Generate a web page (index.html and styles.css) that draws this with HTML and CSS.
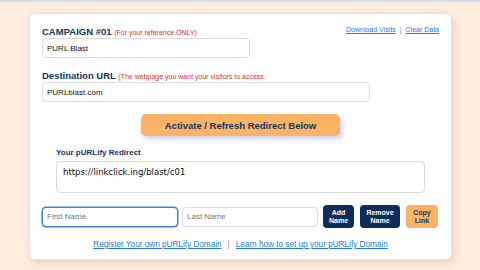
FILE: index.html
```html
<!DOCTYPE html>
<html lang="en">
<head>
  <meta charset="UTF-8">
  <title>pURLify Campaign</title>
  <link rel="stylesheet" href="styles.css">
</head>
<body>
  <div class="card">
    <div class="head-row">
      <div class="label">CAMPAIGN #01 <span class="note">(For your reference ONLY)</span></div>
      <div class="top-links">
        <a href="#">Download Visits</a><span class="sep">|</span><a href="#">Clear Data</a>
      </div>
    </div>
    <input type="text" class="field campaign" value="PURL Blast">

    <div class="label dest">Destination URL <span class="note">(The webpage you want your visitors to access.</span></div>
    <input type="text" class="field dest-url" value="PURLblast.com">

    <div class="activate-wrap">
      <button class="activate">Activate / Refresh Redirect Below</button>
    </div>

    <div class="redirect">
      <div class="redirect-label">Your pURLify Redirect</div>
      <div class="redirect-box">https://linkclick.ing/blast/c01</div>
    </div>

    <div class="name-row">
      <input type="text" class="field name focused" placeholder="First Name">
      <input type="text" class="field name" placeholder="Last Name">
      <button class="small navy add">Add<br>Name</button>
      <button class="small navy remove">Remove<br>Name</button>
      <button class="small orange copy">Copy<br>Link</button>
    </div>

    <div class="footer">
      <a href="#">Register Your own pURLify Domain</a><span class="sep">|</span><a href="#">Learn how to set up your pURLify Domain</a>
    </div>
  </div>
</body>
</html>
```

FILE: styles.css
```css
body {
  margin: 0;
  padding: 0;
  font-family: 'Liberation Sans', Arial, sans-serif;
  background: #fdeedf;
  border-top: 2px solid #d5dcf2;
  height: 268px;
  overflow: hidden;
}
.card {
  margin: 11px 0 0 29px;
  width: 397px;
  height: 233px;
  padding: 12px 12px 0 12px;
  background: #fff;
  border: 1px solid #e6e2e2;
  border-radius: 6px;
  box-shadow: 2px 3px 8px rgba(120, 80, 80, 0.18);
}
.head-row {
  display: flex;
  justify-content: space-between;
  align-items: flex-start;
}
.label {
  font-size: 9.5px;
  font-weight: bold;
  color: #14365f;
  line-height: 11px;
}
.note {
  font-size: 7px;
  font-weight: normal;
  color: #ee2b2b;
}
.top-links {
  font-size: 7px;
  line-height: 9px;
  margin-top: -1px;
}
a {
  color: #1f78e6;
}
.sep {
  color: #888;
  margin: 0 4px;
}
.field {
  box-sizing: border-box;
  height: 20px;
  padding: 0 4px;
  border: 1px solid #dcdcdc;
  border-radius: 4px;
  font-family: 'Liberation Sans', Arial, sans-serif;
  font-size: 8px;
  color: #111;
  background: #fff;
  outline: none;
  display: block;
}
.field::placeholder {
  color: #777;
}
.campaign {
  width: 208px;
}
.dest {
  margin-top: 12px;
}
.dest-url {
  width: 328px;
}
.activate-wrap {
  display: flex;
  justify-content: center;
  margin-top: 12px;
}
.activate {
  width: 199px;
  height: 22px;
  border: none;
  border-radius: 5px;
  background: #fdb365;
  color: #14365f;
  font-family: 'Liberation Sans', Arial, sans-serif;
  font-size: 9.5px;
  font-weight: bold;
  box-shadow: 2px 3px 5px rgba(110, 110, 220, 0.35);
}
.redirect {
  padding: 0 14px;
  margin-top: 12px;
}
.redirect-label {
  font-size: 8px;
  font-weight: bold;
  color: #14365f;
  line-height: 10px;
}
.redirect-box {
  box-sizing: border-box;
  margin-top: 3px;
  height: 32px;
  padding: 5px 6px;
  border: 1px solid #dcdcdc;
  border-radius: 4px;
  font-family: 'DejaVu Sans', sans-serif;
  font-size: 8.5px;
  color: #111;
}
.name-row {
  display: flex;
  align-items: center;
  margin-top: 12px;
}
.name {
  width: 136px;
  height: 20px;
  margin-right: 4px;
}
.name + .name {
  margin-right: 5px;
}
.focused {
  border: 1px solid #3f7fd9;
  box-shadow: 0 0 0 0.5px #3f7fd9;
}
.small {
  height: 23px;
  padding: 0;
  border: none;
  border-radius: 4px;
  font-family: 'Liberation Sans', Arial, sans-serif;
  font-size: 7px;
  font-weight: bold;
  line-height: 8px;
  margin-right: 6px;
}
.navy {
  background: #0c2d5c;
  color: #fff;
}
.orange {
  background: #fdb365;
  color: #14365f;
}
.add {
  width: 31px;
}
.remove {
  width: 40px;
}
.copy {
  width: 32px;
  margin-right: 0;
}
.footer {
  margin-top: 12px;
  text-align: center;
  font-size: 8.2px;
  line-height: 10px;
}
.footer .sep {
  margin: 0 6px;
}
```
